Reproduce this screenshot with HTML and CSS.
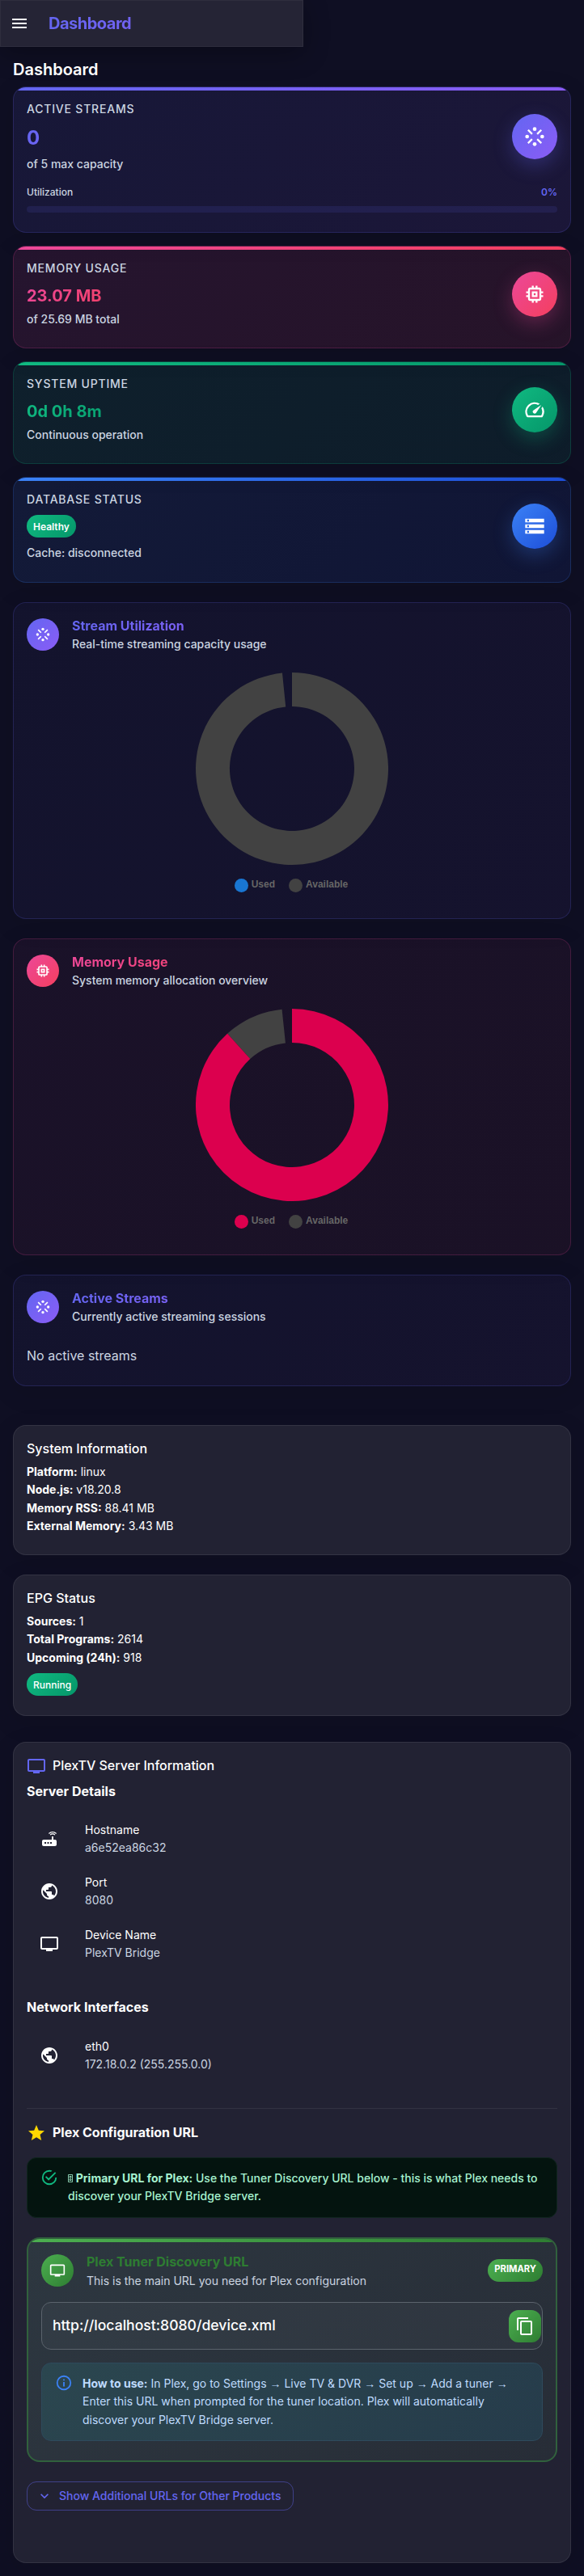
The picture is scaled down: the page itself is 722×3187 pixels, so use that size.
FILE: index.html
```html
<!DOCTYPE html>
<html lang="en">
<head>
<meta charset="utf-8">
<title>Dashboard</title>
<link rel="stylesheet" href="styles.css">
</head>
<body>
<svg class="sprite" aria-hidden="true">
  <symbol id="stream" viewBox="0 0 24 24"><circle cx="20" cy="12" r="2"/><circle cx="4" cy="12" r="2"/><circle cx="12" cy="20" r="2"/><circle cx="12" cy="4" r="2"/><path d="M10.05 8.59 6.03 4.55h-.01l-.31-.32-1.42 1.41 4.02 4.05.01-.01.31.32zm3.893.027 4.405-4.392L19.76 5.64l-4.405 4.393zM10.01 15.36l-1.42-1.41-4.03 4.01-.32.33 1.41 1.41 4.03-4.02zm9.75 2.94-3.99-4.01-.36-.35L14 15.35l3.99 4.01.35.35z"/></symbol>
  <symbol id="memory" viewBox="0 0 24 24"><path d="M15 9H9v6h6V9zm-2 4h-2v-2h2v2zm8-2V9h-2V7c0-1.1-.9-2-2-2h-2V3h-2v2h-2V3H9v2H7c-1.1 0-2 .9-2 2v2H3v2h2v2H3v2h2v2c0 1.1.9 2 2 2h2v2h2v-2h2v2h2v-2h2c1.1 0 2-.9 2-2v-2h2v-2h-2v-2h2zm-4 6H7V7h10v10z"/></symbol>
  <symbol id="speed" viewBox="0 0 24 24"><path d="m20.38 8.57-1.23 1.85a8 8 0 0 1-.22 7.58H5.07A8 8 0 0 1 15.58 6.85l1.85-1.23A10 10 0 0 0 3.35 19a2 2 0 0 0 1.72 1h13.85a2 2 0 0 0 1.74-1 10 10 0 0 0-.27-10.44zm-9.79 6.84a2 2 0 0 0 2.83 0l5.66-8.49-8.49 5.66a2 2 0 0 0 0 2.83z"/></symbol>
  <symbol id="storage" viewBox="0 0 24 24"><path d="M2 20h20v-4H2v4zm2-3h2v2H4v-2zM2 4v4h20V4H2zm4 3H4V5h2v2zm-4 7h20v-4H2v4zm2-3h2v2H4v-2z"/></symbol>
  <symbol id="tv" viewBox="0 0 24 24"><path d="M21 3H3c-1.1 0-2 .9-2 2v12c0 1.1.9 2 2 2h5v2h8v-2h5c1.1 0 1.99-.9 1.99-2L23 5c0-1.1-.9-2-2-2zm0 14H3V5h18v12z"/></symbol>
  <symbol id="router" viewBox="0 0 24 24"><path d="m20.2 5.9.8-.8C19.6 3.7 17.8 3 16 3s-3.6.7-5 2.1l.8.8C13 4.8 14.5 4.2 16 4.2s3 .6 4.2 1.7zm-.9.8c-.9-.9-2.1-1.4-3.3-1.4s-2.4.5-3.3 1.4l.8.8c.7-.7 1.6-1 2.5-1 .9 0 1.8.3 2.5 1l.8-.8zM19 13h-2V9h-2v4H5c-1.1 0-2 .9-2 2v4c0 1.1.9 2 2 2h14c1.1 0 2-.9 2-2v-4c0-1.1-.9-2-2-2zM8 18H6v-2h2v2zm3.5 0h-2v-2h2v2zm3.5 0h-2v-2h2v2z"/></symbol>
  <symbol id="public" viewBox="0 0 24 24"><path d="M12 2C6.48 2 2 6.48 2 12s4.48 10 10 10 10-4.48 10-10S17.52 2 12 2zm-1 17.93c-3.95-.49-7-3.85-7-7.93 0-.62.08-1.21.21-1.79L9 15v1c0 1.1.9 2 2 2v1.93zm6.9-2.54c-.26-.81-1-1.39-1.9-1.39h-1v-3c0-.55-.45-1-1-1H8v-2h2c.55 0 1-.45 1-1V7h2c1.1 0 2-.9 2-2v-.41c2.93 1.19 5 4.06 5 7.41 0 2.08-.8 3.97-2.1 5.39z"/></symbol>
</svg>

<header class="appbar">
  <svg class="icon-24" viewBox="0 0 24 24"><path d="M3 18h18v-2H3v2zm0-5h18v-2H3v2zm0-7v2h18V6H3z"/></svg>
  <div class="appbar-title">Dashboard</div>
</header>

<main class="content">
  <h1 class="page-title">Dashboard</h1>

  <section class="metric metric-streams violet">
    <div class="metric-row">
      <div class="metric-text">
        <div class="metric-label">Active Streams</div>
        <div class="metric-value large">0</div>
        <div class="metric-sub">of 5 max capacity</div>
      </div>
      <div class="badge"><svg><use href="#stream"/></svg></div>
    </div>
    <div class="util"><span>Utilization</span><span class="util-value">0%</span></div>
    <div class="util-bar"></div>
  </section>

  <section class="metric pink">
    <div class="metric-row">
      <div class="metric-text">
        <div class="metric-label">Memory Usage</div>
        <div class="metric-value">23.07 MB</div>
        <div class="metric-sub">of 25.69 MB total</div>
      </div>
      <div class="badge"><svg><use href="#memory"/></svg></div>
    </div>
  </section>

  <section class="metric green">
    <div class="metric-row">
      <div class="metric-text">
        <div class="metric-label">System Uptime</div>
        <div class="metric-value">0d 0h 8m</div>
        <div class="metric-sub">Continuous operation</div>
      </div>
      <div class="badge"><svg><use href="#speed"/></svg></div>
    </div>
  </section>

  <section class="metric metric-db blue">
    <div class="metric-row">
      <div class="metric-text">
        <div class="metric-label">Database Status</div>
        <div class="chip chip-strong">Healthy</div>
        <div class="metric-sub">Cache: disconnected</div>
      </div>
      <div class="badge"><svg><use href="#storage"/></svg></div>
    </div>
  </section>

  <section class="panel panel-chart violet">
    <div class="panel-head">
      <div class="badge small"><svg><use href="#stream"/></svg></div>
      <div>
        <h2 class="panel-title">Stream Utilization</h2>
        <div class="panel-sub">Real-time streaming capacity usage</div>
      </div>
    </div>
    <svg class="donut" viewBox="-119 -119 238 238">
      <path fill="#424242" d="M0-119A119 119 0 1 1-12.02-118.39L-7.78-76.61A77 77 0 1 0 0-77Z"/>
    </svg>
    <div class="legend">
      <span class="legend-item"><i class="dot dot-blue"></i>Used</span>
      <span class="legend-item"><i class="dot dot-gray"></i>Available</span>
    </div>
  </section>

  <section class="panel panel-chart pink">
    <div class="panel-head">
      <div class="badge small"><svg><use href="#memory"/></svg></div>
      <div>
        <h2 class="panel-title">Memory Usage</h2>
        <div class="panel-sub">System memory allocation overview</div>
      </div>
    </div>
    <svg class="donut" viewBox="-119 -119 238 238">
      <path fill="#424242" d="M-79.9-88.2A119 119 0 0 1-12.44-118.35L-8.05-76.58A77 77 0 0 0-51.7-57.07Z"/>
      <path fill="#dc004e" d="M0-119A119 119 0 1 1-79.9-88.2L-51.7-57.07A77 77 0 1 0 0-77Z"/>
    </svg>
    <div class="legend">
      <span class="legend-item"><i class="dot dot-red"></i>Used</span>
      <span class="legend-item"><i class="dot dot-gray"></i>Available</span>
    </div>
  </section>

  <section class="panel panel-active violet">
    <div class="panel-head">
      <div class="badge small"><svg><use href="#stream"/></svg></div>
      <div>
        <h2 class="panel-title">Active Streams</h2>
        <div class="panel-sub">Currently active streaming sessions</div>
      </div>
    </div>
    <p class="empty">No active streams</p>
  </section>

  <section class="card card-system">
    <h2 class="card-title">System Information</h2>
    <p class="fact"><b>Platform:</b> linux</p>
    <p class="fact"><b>Node.js:</b> v18.20.8</p>
    <p class="fact"><b>Memory RSS:</b> 88.41 MB</p>
    <p class="fact"><b>External Memory:</b> 3.43 MB</p>
  </section>

  <section class="card card-epg">
    <h2 class="card-title">EPG Status</h2>
    <p class="fact"><b>Sources:</b> 1</p>
    <p class="fact"><b>Total Programs:</b> 2614</p>
    <p class="fact"><b>Upcoming (24h):</b> 918</p>
    <div class="chip">Running</div>
  </section>

  <section class="card card-plex">
    <h2 class="card-title with-icon"><svg class="icon-24 icon-violet"><use href="#tv"/></svg>PlexTV Server Information</h2>
    <h3 class="subhead">Server Details</h3>
    <ul class="list">
      <li><svg class="icon-24"><use href="#router"/></svg><div><div>Hostname</div><div class="muted">a6e52ea86c32</div></div></li>
      <li><svg class="icon-24"><use href="#public"/></svg><div><div>Port</div><div class="muted">8080</div></div></li>
      <li><svg class="icon-24"><use href="#tv"/></svg><div><div>Device Name</div><div class="muted">PlexTV Bridge</div></div></li>
    </ul>
    <h3 class="subhead subhead-network">Network Interfaces</h3>
    <ul class="list">
      <li><svg class="icon-24"><use href="#public"/></svg><div><div>eth0</div><div class="muted">172.18.0.2 (255.255.0.0)</div></div></li>
    </ul>
    <hr class="divider">
    <h3 class="subhead with-icon config-head"><svg class="icon-24 icon-gold" viewBox="0 0 24 24"><path d="M12 17.27 18.18 21l-1.64-7.03L22 9.24l-7.19-.61L12 2 9.19 8.63 2 9.24l5.46 4.73L5.82 21z"/></svg>Plex Configuration URL</h3>

    <div class="alert alert-success">
      <svg class="alert-icon" viewBox="0 0 24 24"><path d="M20,12A8,8 0 0,1 12,20A8,8 0 0,1 4,12A8,8 0 0,1 12,4C12.76,4 13.5,4.11 14.2,4.31L15.77,2.74C14.61,2.26 13.34,2 12,2A10,10 0 0,0 2,12A10,10 0 0,0 12,22A10,10 0 0,0 22,12M7.91,10.08L6.5,11.5L11,16L21,6L19.59,4.58L11,13.17L7.91,10.08Z"/></svg>
      <div><svg class="glyph-box" viewBox="0 0 6 10"><path fill="none" stroke="currentColor" stroke-width=".8" d="M.5.5h5v9h-5zM2 2.5h2v1.6H2zM2 5.9h2v1.6H2z"/></svg> <b>Primary URL for Plex:</b> Use the Tuner Discovery URL below - this is what Plex needs to discover your PlexTV Bridge server.</div>
    </div>

    <div class="tuner">
      <div class="tuner-head">
        <div class="badge small"><svg><use href="#tv"/></svg></div>
        <div class="tuner-text">
          <div class="tuner-title">Plex Tuner Discovery URL</div>
          <div class="tuner-sub">This is the main URL you need for Plex configuration</div>
        </div>
        <div class="chip chip-primary">PRIMARY</div>
      </div>
      <div class="url-field">
        <span>http://localhost:8080/device.xml</span>
        <button class="copy" aria-label="Copy"><svg class="icon-24" viewBox="0 0 24 24"><path d="M16 1H4c-1.1 0-2 .9-2 2v14h2V3h12V1zm3 4H8c-1.1 0-2 .9-2 2v14c0 1.1.9 2 2 2h11c1.1 0 2-.9 2-2V7c0-1.1-.9-2-2-2zm0 16H8V7h11v14z"/></svg></button>
      </div>
      <div class="alert alert-info">
        <svg class="alert-icon" viewBox="0 0 24 24"><path d="M11,9H13V7H11M12,20C7.59,20 4,16.41 4,12C4,7.59 7.59,4 12,4C16.41,4 20,7.59 20,12C20,16.41 16.41,20 12,20M12,2A10,10 0 0,0 2,12A10,10 0 0,0 12,22A10,10 0 0,0 22,12A10,10 0 0,0 12,2M11,17H13V11H11V17Z"/></svg>
        <div><b>How to use:</b> In Plex, go to Settings <span class="arrow">→</span> Live TV &amp; DVR <span class="arrow">→</span> Set up <span class="arrow">→</span> Add a tuner <span class="arrow">→</span> Enter this URL when prompted for the tuner location. Plex will automatically discover your PlexTV Bridge server.</div>
      </div>
    </div>

    <button class="more"><svg viewBox="0 0 24 24"><path d="M16.59 8.59 12 13.17 7.41 8.59 6 10l6 6 6-6z"/></svg>Show Additional URLs for Other Products</button>
  </section>
</main>
</body>
</html>
```
FILE: styles.css
```css
* { box-sizing: border-box; }
body {
  margin: 0;
  min-height: 3187px;
  background: #0f0f23;
  color: #fff;
  font: 400 14px/22.4px Inter, "Liberation Sans", sans-serif;
}
h1, h2, h3, p, ul { margin: 0; padding: 0; }
b { font-weight: 700; }
svg { display: block; fill: currentColor; flex: none; }
.sprite { position: absolute; width: 0; height: 0; }
.icon-24 { width: 24px; height: 24px; }

.violet { --a: #6366f1; --b: #8b5cf6; --a-rgb: 99, 102, 241; --b-rgb: 139, 92, 246; }
.pink { --a: #ec4899; --b: #f43f5e; --a-rgb: 236, 72, 153; --b-rgb: 244, 63, 94; }
.green { --a: #10b981; --b: #059669; --a-rgb: 16, 185, 129; --b-rgb: 5, 150, 105; }
.blue { --a: #3b82f6; --b: #1d4ed8; --a-rgb: 59, 130, 246; --b-rgb: 29, 78, 216; }

.appbar {
  width: 375px;
  height: 58px;
  padding: 0 12px;
  display: flex;
  align-items: center;
  gap: 23px;
  background: #252435;
  border: 1px solid #2f2e3e;
  box-shadow: 0 8px 32px rgba(0, 0, 0, .3);
}
.appbar .icon-24 { margin-left: -1px; margin-right: 1px; }
.appbar-title {
  font-size: 20px;
  font-weight: 700;
  line-height: 32px;
  letter-spacing: -.5px;
  flex: 1;
  background: linear-gradient(135deg, #6366f1, #8b5cf6);
  -webkit-background-clip: text;
  background-clip: text;
  color: transparent;
}

.content { padding: 12px 16px 16px; }
.page-title { font-size: 20px; font-weight: 600; line-height: 32px; margin-bottom: 5px; }

.metric {
  position: relative;
  overflow: hidden;
  height: 126.8px;
  padding: 16px;
  margin-bottom: 16px;
  border: 1px solid rgba(var(--a-rgb), .2);
  border-radius: 16px;
  background: linear-gradient(135deg, rgba(var(--a-rgb), .1), rgba(var(--b-rgb), .1));
  box-shadow: 0 8px 32px rgba(0, 0, 0, .1);
}
.metric::before {
  content: "";
  position: absolute;
  top: 0;
  left: 0;
  right: 0;
  height: 4px;
  background: linear-gradient(90deg, var(--a), var(--b));
}
.metric-streams { height: 181.4px; }
.metric-db { height: 131px; margin-bottom: 24px; }
.metric-row { display: flex; align-items: center; justify-content: space-between; }
.metric-label {
  color: #cbd5e1;
  font-weight: 500;
  letter-spacing: .8px;
  text-transform: uppercase;
}
.metric-value {
  margin: 10px 0 6px;
  font-size: 20px;
  font-weight: 700;
  line-height: 24px;
  background: linear-gradient(135deg, var(--a), var(--b));
  -webkit-background-clip: text;
  background-clip: text;
  color: transparent;
}
.metric-value.large { font-size: 24px; line-height: 29px; margin: 9.5px 0 7px; }
.metric-sub { color: #cbd5e1; font-weight: 500; }
.badge {
  width: 56px;
  height: 56px;
  flex: none;
  border-radius: 50%;
  display: grid;
  place-items: center;
  background: linear-gradient(135deg, var(--a), var(--b));
  box-shadow: 0 8px 24px rgba(var(--a-rgb), .3);
}
.badge svg { width: 28px; height: 28px; }
.badge.small { width: 40px; height: 40px; box-shadow: none; }
.badge.small svg { width: 20px; height: 20px; }
.util {
  display: flex;
  justify-content: space-between;
  margin: 14px 0 8px;
  font-size: 12px;
  font-weight: 500;
  line-height: 19px;
  color: #cbd5e1;
}
.util-value { color: #6366f1; font-weight: 600; }
.util-bar { height: 8px; border-radius: 4px; background: rgba(99, 102, 241, .12); }

.chip {
  width: fit-content;
  height: 28px;
  padding: 0 8px;
  border-radius: 14px;
  font-size: 12px;
  font-weight: 500;
  line-height: 29.4px;
  background: linear-gradient(135deg, #10b981, #059669);
}
.chip-strong { font-weight: 600; margin: 7.6px 0 7.7px; }

.panel {
  padding: 16px;
  margin-bottom: 24px;
  border: 1px solid rgba(var(--a-rgb), .2);
  border-radius: 16px;
  background: linear-gradient(135deg, rgba(var(--a-rgb), .05), rgba(var(--b-rgb), .05));
  box-shadow: 0 8px 32px rgba(0, 0, 0, .1);
}
.panel-chart { height: 392px; }
.panel-active { height: 138px; margin-bottom: 48px; }
.panel-head { display: flex; align-items: center; gap: 16px; }
.panel-title {
  font-size: 16px;
  font-weight: 700;
  line-height: 24.5px;
  background: linear-gradient(135deg, var(--a), var(--b));
  -webkit-background-clip: text;
  background-clip: text;
  color: transparent;
}
.panel-sub { color: #cbd5e1; font-weight: 500; }
.donut { width: 238px; height: 238px; margin: 23.1px auto 16px; }
.legend {
  display: flex;
  justify-content: center;
  gap: 17px;
  padding-right: 2px;
  font: 700 12px/20px "Liberation Sans", Arial, sans-serif;
  color: #666;
}
.legend-item { display: flex; align-items: center; gap: 4px; height: 17px; line-height: 14px; }
.dot { width: 17px; height: 17px; border-radius: 50%; margin-top: 2px; }
.dot-blue { background: #1976d2; }
.dot-gray { background: #424242; }
.dot-red { background: #dc004e; }
.empty { margin-top: 23.7px; font-size: 16px; line-height: 25.6px; color: #cbd5e1; }

.card {
  padding: 16px;
  border: 1px solid rgba(255, 255, 255, .08);
  border-radius: 16px;
  background: #222233;
  box-shadow: 0 8px 32px rgba(0, 0, 0, .1);
}
.card-title { font-size: 16px; font-weight: 500; line-height: 25.6px; margin-bottom: 4.5px; }
.card-system { height: 161px; margin-bottom: 24px; }
.card-epg { height: 175px; margin-bottom: 32px; }
.card-epg .chip { margin-top: 7.7px; }
.card-plex { height: 1016px; }
.with-icon { display: flex; align-items: center; gap: 8px; }
.icon-violet { color: #6366f1; }
.icon-gold { color: #ffd700; }
.subhead { font-size: 16px; font-weight: 700; line-height: 25.6px; margin-top: 6px; }
.subhead-network { margin-top: 33.6px; }
.list { list-style: none; padding-top: 13.8px; }
.list li { display: flex; align-items: center; height: 64.9px; padding-left: 16px; gap: 32px; }
.muted { color: #cbd5e1; }
.divider { height: 1px; border: 0; margin: 32.4px 0 17.5px; background: #323242; }
.config-head { margin: 0; }

.alert { display: flex; gap: 12px; border-radius: 12px; border: 1px solid; padding: 14px 16px; }
.alert-icon { width: 22px; height: 22px; margin-top: -1px; }
.alert-success {
  height: 75px;
  margin-top: 17px;
  padding-right: 12px;
  font-weight: 500;
  color: #a7f3d0;
  background: #04140f;
  border-color: #10251f;
}
.alert-success .alert-icon { color: #10b981; }
.glyph-box { display: inline-block; width: 6px; height: 10px; vertical-align: 0; }

.tuner {
  --a: #4caf50;
  --b: #2e7d32;
  position: relative;
  overflow: hidden;
  height: 278px;
  margin-top: 24px;
  padding: 16px;
  border: 2px solid #31613d;
  border-radius: 16px;
  background: linear-gradient(135deg, #2d3740, #272d37);
}
.tuner::before {
  content: "";
  position: absolute;
  top: 0;
  left: 0;
  right: 0;
  height: 4px;
  background: linear-gradient(90deg, var(--a), var(--b));
}
.tuner-head { display: flex; align-items: center; gap: 16px; }
.tuner-text { flex: 1; }
.tuner-title { font-size: 16px; font-weight: 700; line-height: 24.5px; color: #2e7d32; }
.tuner-sub { color: #cbd5e1; }
.chip-primary {
  font-size: 11.2px;
  font-weight: 700;
  line-height: 25.5px;
  background: linear-gradient(135deg, #4caf50, #2e7d32);
}
.url-field {
  display: flex;
  align-items: center;
  justify-content: space-between;
  height: 59px;
  margin-top: 15.1px;
  padding: 0 1px 0 13px;
  border: 1px solid #5b636c;
  border-radius: 12px;
  background: rgba(255, 255, 255, .03);
  font-size: 17.6px;
  font-weight: 500;
}
.copy {
  width: 40px;
  height: 40px;
  padding: 0;
  border: 0;
  border-radius: 12px;
  color: #fff;
  display: grid;
  place-items: center;
  background: linear-gradient(135deg, #4caf50, #2e7d32);
}
.alert-info {
  height: 97px;
  margin-top: 16px;
  padding: 14px 16px;
  color: #bfdbfe;
  background: linear-gradient(135deg, #2b464f, #263c4b);
  border-color: #2e4a5c;
}
.alert-info .alert-icon { color: #3b82f6; }
.arrow { font-family: "Liberation Sans", Arial, sans-serif; }

.more {
  display: flex;
  align-items: center;
  gap: 8px;
  width: 330px;
  height: 36px;
  margin-top: 24px;
  padding: 0 0 0 11px;
  border: 1px solid rgba(99, 102, 241, .45);
  border-radius: 12px;
  background: transparent;
  color: #6366f1;
  font: 500 14px/22.4px Inter, "Liberation Sans", sans-serif;
  white-space: nowrap;
}
.more svg { width: 20px; height: 20px; }
```
